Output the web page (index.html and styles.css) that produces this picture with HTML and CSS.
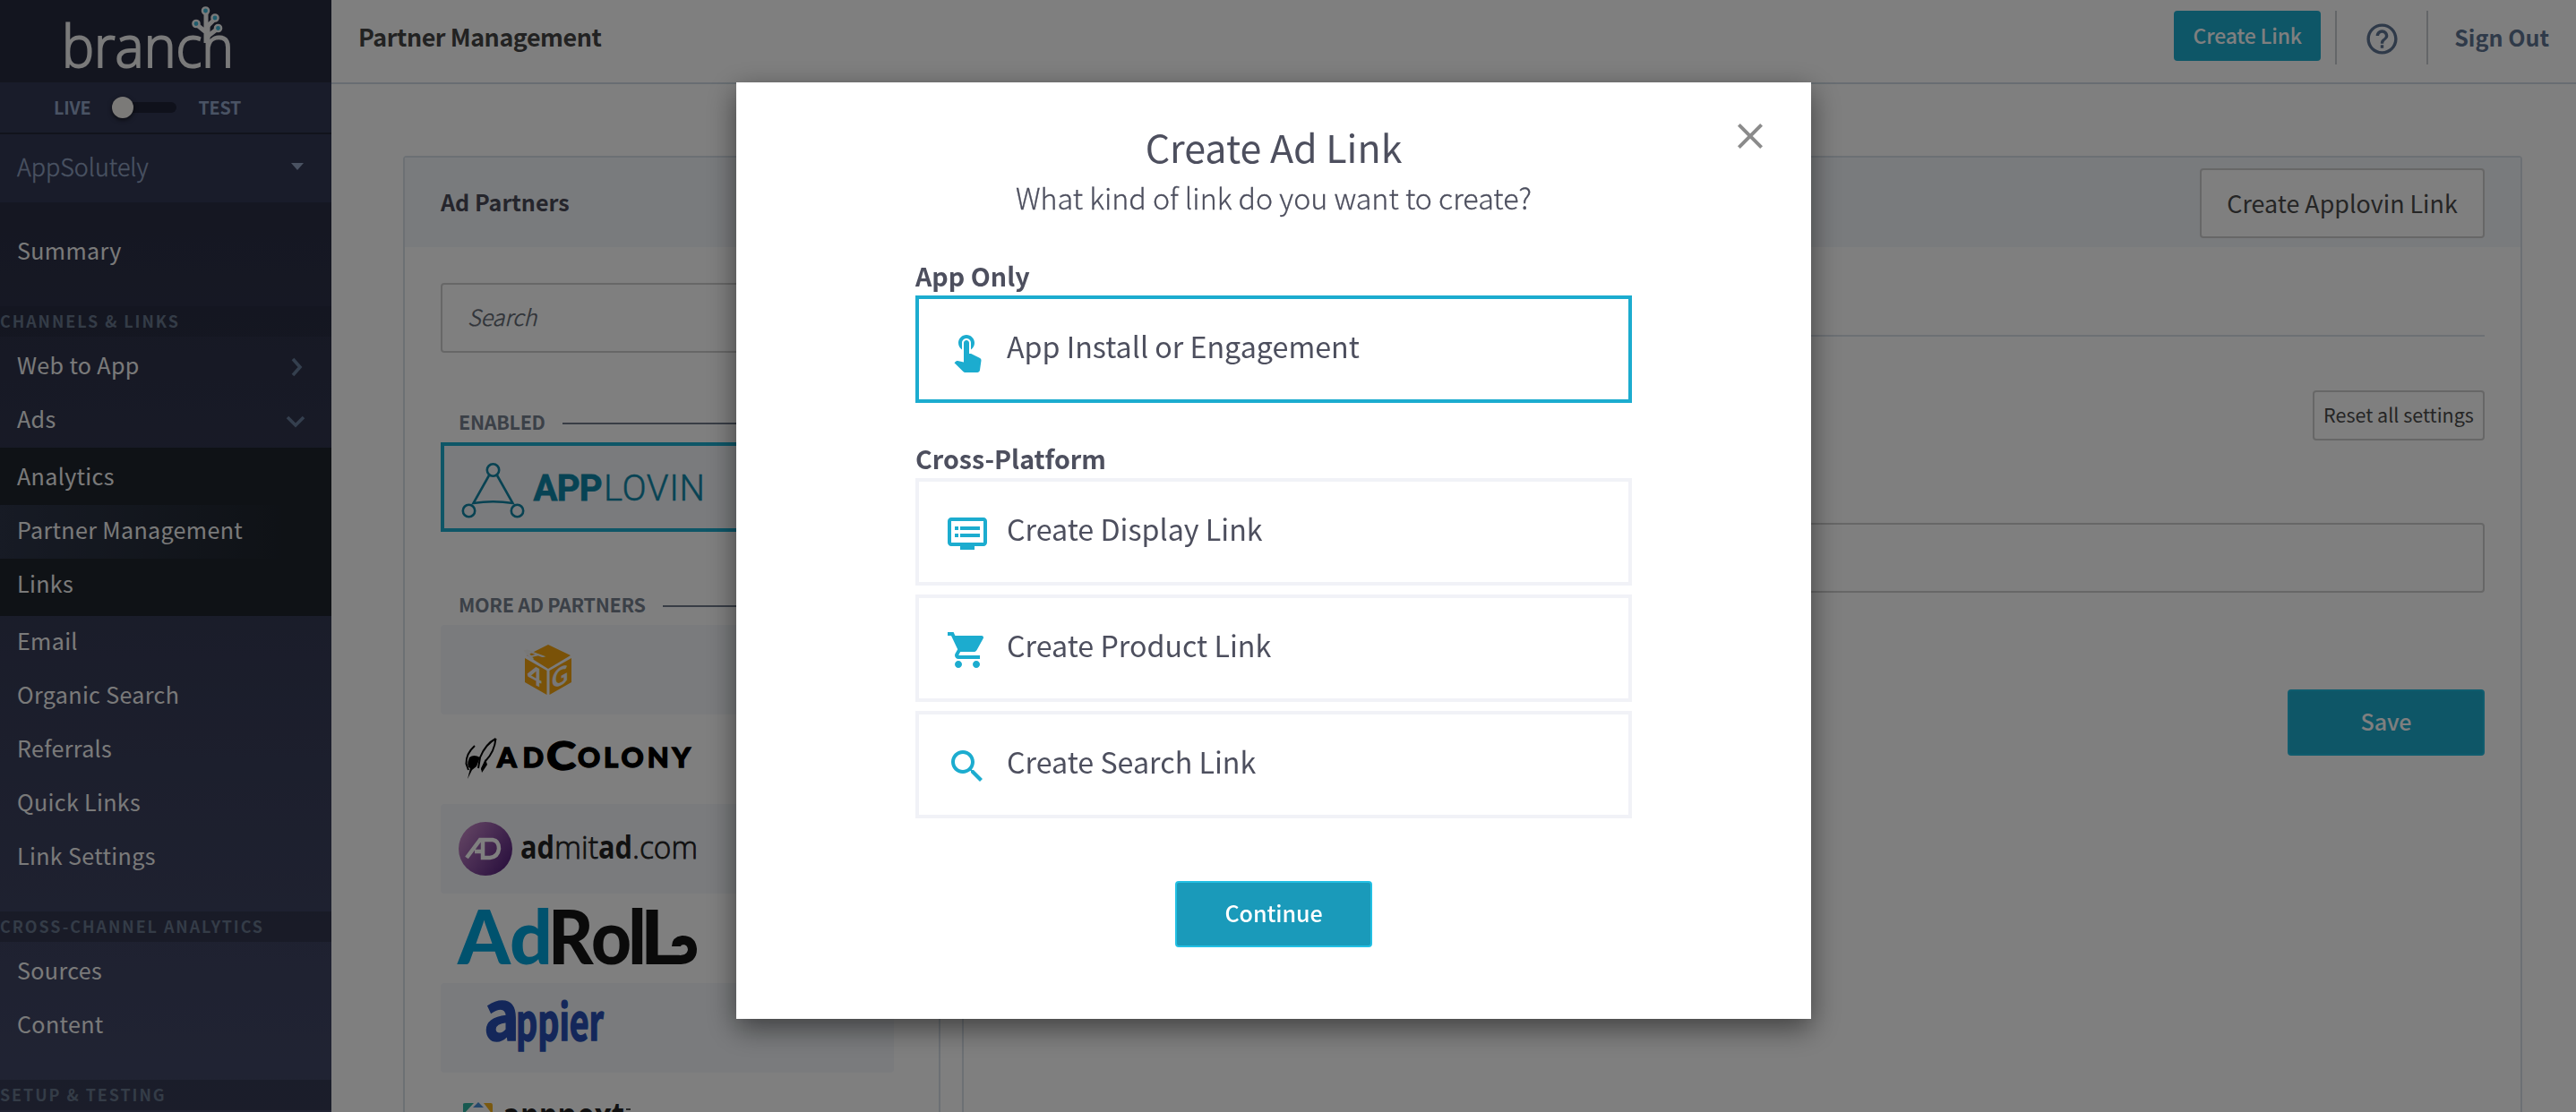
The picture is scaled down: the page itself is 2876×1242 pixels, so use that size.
FILE: index.html
```html
<!DOCTYPE html>
<html lang="en">
<head>
<meta charset="utf-8">
<title>Partner Management</title>
<link rel="stylesheet" href="styles.css">
</head>
<body>
<div class="app">
  <aside class="sidebar">
    <div class="brand">
      <svg class="brand-logo" width="370" height="92" viewBox="0 0 370 92" aria-label="branch">
        <text class="brand-word" x="69" y="75" textLength="192" lengthAdjust="spacingAndGlyphs">branch</text>
        <g class="brand-tree">
          <path d="M230 12V48M230 31L240 21M230 36L219 27M230 42L243 32"/>
          <circle cx="229.500" cy="12" r="3.600"/>
          <circle cx="240" cy="20" r="3.600"/>
          <circle cx="219" cy="26.500" r="3.600"/>
          <circle cx="243.500" cy="31.500" r="3.600"/>
        </g>
      </svg>
    </div>
    <div class="mode">
      <span>LIVE</span>
      <span class="toggle"><span class="knob"></span></span>
      <span>TEST</span>
    </div>
    <div class="app-picker"><span>AppSolutely</span><svg width="14" height="8" viewBox="0 0 14 8"><path d="M0 0H14L7 8Z"/></svg></div>
    <nav class="nav">
      <div class="group first"><a class="item">Summary</a></div>
      <div class="label soft">CHANNELS &amp; LINKS</div>
      <div class="group">
        <a class="item">Web to App<svg class="chev" width="24" height="24" viewBox="0 0 24 24"><path d="M9 3L17 12L9 21"/></svg></a>
        <a class="item">Ads<svg class="chev" width="24" height="24" viewBox="0 0 24 24"><path d="M3 8L12 17L21 8"/></svg></a>
        <div class="sub">
          <a class="item">Analytics</a>
          <a class="item current">Partner Management</a>
          <a class="item">Links</a>
        </div>
        <a class="item">Email</a>
        <a class="item">Organic Search</a>
        <a class="item">Referrals</a>
        <a class="item">Quick Links</a>
        <a class="item">Link Settings</a>
      </div>
      <div class="label">CROSS-CHANNEL ANALYTICS</div>
      <div class="group">
        <a class="item">Sources</a>
        <a class="item">Content</a>
      </div>
      <div class="label">SETUP &amp; TESTING</div>
    </nav>
  </aside>

  <div class="page">
    <header class="topbar">
      <h1>Partner Management</h1>
      <div class="actions">
        <button class="btn-top">Create Link</button>
        <span class="help"><svg width="41" height="41" viewBox="0 0 24 24"><path d="M11 18h2v-2h-2v2zm1-16C6.480 2 2 6.480 2 12s4.480 10 10 10 10-4.480 10-10S17.520 2 12 2zm0 18c-4.410 0-8-3.590-8-8s3.590-8 8-8 8 3.590 8 8-3.590 8-8 8zm0-14c-2.210 0-4 1.790-4 4h2c0-1.100.9-2 2-2s2 .9 2 2c0 2-3 1.750-3 5h2c0-2.250 3-2.500 3-5 0-2.210-1.790-4-4-4z"/></svg></span>
        <a class="signout">Sign Out</a>
      </div>
    </header>
    <main class="content">
      <section class="panel partners">
        <div class="panel-head"><h2>Ad Partners</h2></div>
        <div class="search">Search</div>
        <div class="divider"><span>ENABLED</span></div>
        <div class="partner selected">
          <svg width="498" height="92" viewBox="4 4 498 92" aria-label="AppLovin">
            <g class="lovin-mark">
              <circle cx="58.500" cy="31" r="6.700"/><circle cx="31.500" cy="76.500" r="6.700"/><circle cx="85.500" cy="76.500" r="6.700"/>
              <path d="M54 37L36.500 68Q58.500 64.500 80.500 68L63 37"/>
            </g>
            <text class="lovin-bold" x="103.500" y="65" textLength="77" lengthAdjust="spacing">APP</text>
            <text class="lovin-light" x="182" y="65" textLength="113" lengthAdjust="spacing">LOVIN</text>
          </svg>
        </div>
        <div class="divider more"><span>MORE AD PARTNERS</span></div>
        <div class="partner tint">
          <svg width="506" height="100" viewBox="0 0 506 100" aria-label="A4G">
            <path class="cube" d="M120 22L145 34L120 49L96 34ZM94 37L118.500 51V78L94 64ZM146 37L121.500 51V78L146 64Z"/>
            <text class="cube-text" transform="matrix(1.1 -.25 .95 .6 101 39)" font-size="21">A</text>
            <text class="cube-text" transform="matrix(1 .55 0 1 97 62)" font-size="28">4</text>
            <text class="cube-text" transform="matrix(.9 -.5 0 1 124 73)" font-size="28">G</text>
          </svg>
        </div>
        <div class="partner">
          <svg width="506" height="100" viewBox="0 0 506 100" aria-label="AdColony">
            <path class="rocket" d="M61.500 27Q50 33 44 48L42 60M61.500 27Q60 42 50 52L46 62M38 35Q28 44 28.500 55L31 62"/>
            <path class="rocket-fill" d="M32 48Q37 44 44 48L40 58L35 62L30 72L33 60Q28 58 32 48ZM50 50L52 56L46 65L45 60Z"/>
            <text class="colony" x="63" y="58.500" font-size="31" textLength="52" lengthAdjust="spacing">AD</text>
            <text class="colony" x="118" y="62" font-size="44" textLength="33" lengthAdjust="spacingAndGlyphs">C</text>
            <text class="colony" x="153" y="58.500" font-size="31" textLength="126" lengthAdjust="spacing">OLONY</text>
          </svg>
        </div>
        <div class="partner tint">
          <svg width="506" height="100" viewBox="0 0 506 100" aria-label="admitad">
            <defs><linearGradient id="adm" x1="0" y1=".1" x2="1" y2=".8"><stop offset="0" stop-color="#c98cc8"/><stop offset=".5" stop-color="#8f56a4"/><stop offset="1" stop-color="#54207c"/></linearGradient></defs>
            <circle cx="50" cy="50" r="30" fill="url(#adm)"/>
            <path class="adm-mark" d="M29 60L44 40H58Q65 41 65 50Q64 59 55 60H47V41M38 53H47"/>
            <text class="adm-bold" x="89" y="61" textLength="38" lengthAdjust="spacingAndGlyphs">ad</text>
            <text class="adm-thin" x="127" y="61" textLength="49" lengthAdjust="spacingAndGlyphs">mit</text>
            <text class="adm-bold" x="176" y="61" textLength="38" lengthAdjust="spacingAndGlyphs">ad</text>
            <text class="adm-thin" x="214" y="61" textLength="73" lengthAdjust="spacingAndGlyphs">.com</text>
          </svg>
        </div>
        <div class="partner">
          <svg width="506" height="100" viewBox="0 0 506 100" aria-label="AdRoll">
            <text class="roll blue" x="19" y="79" textLength="106" lengthAdjust="spacingAndGlyphs">Ad</text>
            <text class="roll" x="120" y="79" textLength="93" lengthAdjust="spacingAndGlyphs">Ro</text>
            <text class="roll" x="209" y="79" textLength="21" lengthAdjust="spacingAndGlyphs">l</text>
            <text class="roll" x="223" y="79" textLength="45" lengthAdjust="spacingAndGlyphs">L</text>
            <path class="curl" d="M250 74H268Q281 73 281 62Q280 52 270 52Q263 53 263 59"/>
          </svg>
        </div>
        <div class="partner tint">
          <svg width="506" height="100" viewBox="0 0 506 100" aria-label="Appier">
            <text class="appier" x="48" y="64" font-size="76" textLength="40" lengthAdjust="spacingAndGlyphs">a</text>
            <text class="appier" x="84" y="64" font-size="55" textLength="98" lengthAdjust="spacingAndGlyphs">ppier</text>
          </svg>
        </div>
        <div class="partner">
          <svg width="506" height="100" viewBox="0 0 506 100" aria-label="Appnext">
            <path fill="#2fb3a0" d="M25 35Q25 34 28 34H37L25 47Z"/>
            <path fill="#4a90d9" d="M36 39L42 33L48 39Z"/>
            <path fill="#f5b21e" d="M48 34H56Q58 34 58 37V47Z"/>
            <text class="appnext" x="69" y="65" textLength="136" lengthAdjust="spacingAndGlyphs">appnext</text>
            <path d="M207 41H212" stroke="#555" stroke-width="2"/>
          </svg>
        </div>
      </section>

      <section class="panel settings">
        <div class="panel-head"><button class="btn-outline">Create Applovin Link</button></div>
        <div class="settings-body">
          <div class="rule"></div>
          <button class="btn-outline small">Reset all settings</button>
          <div class="field"></div>
          <button class="btn-primary save">Save</button>
        </div>
      </section>
    </main>
  </div>
</div>

<div class="overlay">
  <div class="modal">
    <svg class="close" width="48" height="48" viewBox="0 0 24 24"><path d="M19 6.410L17.590 5 12 10.590 6.410 5 5 6.410 10.590 12 5 17.590 6.410 19 12 13.410 17.590 19 19 17.590 13.410 12z"/></svg>
    <h3>Create Ad Link</h3>
    <p class="lead">What kind of link do you want to create?</p>
    <h4>App Only</h4>
    <div class="option active">
      <svg width="48" height="48" viewBox="0 0 24 24"><path d="M9 11.240V7.500C9 6.120 10.120 5 11.500 5S14 6.120 14 7.500v3.740c1.210-.81 2-2.180 2-3.740C16 5.010 13.990 3 11.500 3S7 5.010 7 7.500c0 1.560.79 2.930 2 3.740zm9.840 4.630l-4.540-2.260c-.17-.07-.35-.11-.54-.11H13v-6c0-.83-.67-1.500-1.500-1.500S10 6.670 10 7.500v10.740l-3.430-.72c-.08-.01-.15-.03-.24-.03-.31 0-.59.13-.79.33l-.79.8 4.940 4.940c.27.27.65.44 1.060.44h6.790c.75 0 1.330-.55 1.440-1.280l.75-5.270c.01-.07.02-.14.02-.2 0-.62-.38-1.160-.91-1.380z"/></svg>
      <span>App Install or Engagement</span>
    </div>
    <h4>Cross-Platform</h4>
    <div class="option">
      <svg width="48" height="48" viewBox="0 0 24 24"><path d="M21 3H3c-1.100 0-2 .9-2 2v12c0 1.100.9 2 2 2h5v2h8v-2h5c1.100 0 2-.9 2-2V5c0-1.100-.9-2-2-2zm0 14H3V5h18v12zm-2-9H8v2h11V8zm0 4H8v2h11v-2zM7 8H5v2h2V8zm0 4H5v2h2v-2z"/></svg>
      <span>Create Display Link</span>
    </div>
    <div class="option">
      <svg width="48" height="48" viewBox="0 0 24 24"><path d="M7 18c-1.100 0-1.990.9-1.990 2S5.900 22 7 22s2-.9 2-2-.9-2-2-2zM1 2v2h2l3.600 7.590-1.350 2.450c-.16.28-.25.61-.25.960 0 1.100.9 2 2 2h12v-2H7.420c-.14 0-.25-.11-.25-.25l.03-.12.9-1.630h7.450c.75 0 1.410-.41 1.750-1.030l3.580-6.490c.08-.14.12-.31.12-.48 0-.55-.45-1-1-1H5.210l-.94-2H1zm16 16c-1.100 0-1.990.9-1.990 2s.89 2 1.990 2 2-.9 2-2-.9-2-2-2z"/></svg>
      <span>Create Product Link</span>
    </div>
    <div class="option">
      <svg width="48" height="48" viewBox="0 0 24 24"><path d="M15.500 14h-.79l-.28-.27C15.410 12.590 16 11.110 16 9.500 16 5.910 13.090 3 9.500 3S3 5.910 3 9.500 5.910 16 9.500 16c1.610 0 3.090-.59 4.230-1.570l.27.28v.79l5 4.990L20.490 19l-4.990-5zm-6 0C7.010 14 5 11.990 5 9.500S7.010 5 9.500 5 14 7.010 14 9.500 11.990 14 9.500 14z"/></svg>
      <span>Create Search Link</span>
    </div>
    <button class="btn-primary continue">Continue</button>
  </div>
</div>
</body>
</html>
```
FILE: styles.css
```css
* { box-sizing: border-box; }
body {
  margin: 0;
  height: 1242px;
  overflow: hidden;
  background: #fff;
  color: #4d4f5e;
  font-family: "Noto Sans CJK SC", "Source Sans Pro", sans-serif;
}
h1, h2, h3, h4, p { margin: 0; }
button { font-family: inherit; padding: 0; display: block; text-align: center; }
svg { display: block; flex: none; }
.app { display: flex; height: 1242px; overflow: hidden; }

/* Sidebar */
.sidebar { width: 370px; flex: none; background: #2a2e44; display: flex; flex-direction: column; }
.brand { height: 92px; background: #262a3e; }
.brand-word { font: 300 64px "Open Sans", sans-serif; fill: #f4f4f4; stroke: #f4f4f4; stroke-width: 2px; }
.brand-tree { stroke: #f4f4f4; stroke-width: 5px; fill: none; }
.brand-tree circle { fill: #3cb6d8; stroke-width: 2.4px; }
.mode {
  height: 58px; border-bottom: 2px solid #232739; background: #323854;
  display: flex; align-items: center; gap: 24px; padding-left: 60px;
  font-size: 19.7px; line-height: 20px; font-weight: 700; color: #94a7c8; letter-spacing: -.2px;
}
.toggle { width: 72px; height: 12px; border-radius: 6px; background: #1e2236; display: flex; align-items: center; }
.knob { width: 24px; height: 24px; border-radius: 50%; background: #f6f4f0; box-shadow: 0 2px 5px rgba(0, 0, 0, .6); flex: none; }
.app-picker {
  height: 76px; background: #323854; display: flex; justify-content: space-between; align-items: center;
  padding: 0 31px 4px 19px; font-size: 26.86px; line-height: 40px; font-weight: 300; color: #94a5c4;
  -webkit-text-stroke: .4px #94a5c4;
}
.app-picker svg { fill: #94a5c4; }
.nav { flex: 1; background: linear-gradient(#2a2e44, #424868); overflow: hidden; }
.group { padding: 4px 0 30px; }
.group.first { padding-top: 26px; }
.item {
  display: flex; justify-content: space-between; height: 60px; padding: 0 28px 6px 19px;
  font-size: 25.07px; line-height: 54px; letter-spacing: .35px; color: #f4f4f4;
}
.chev { fill: none; stroke: #687e9c; stroke-width: 3.6px; margin-top: 18px; }
.sub { background: #1e242c; padding: 4px 0; }
.current { background: linear-gradient(90deg, #2e364a, #1e242c 327px); }
.label {
  height: 34px; background: rgba(0, 0, 0, .18); color: #68788f; white-space: nowrap;
  font-size: 17.9px; line-height: 32px; font-weight: 700; letter-spacing: 1.95px;
}
.label.soft { background: rgba(0, 0, 0, .08); }

/* Top bar */
.page { flex: 1; min-width: 0; }
.topbar { height: 94px; border-bottom: 2px solid #d0dbe4; display: flex; justify-content: space-between; padding: 12px 30px 0 30px; }
.topbar h1 { font-size: 26.86px; line-height: 58px; font-weight: 700; letter-spacing: -.45px; color: #444; }
.actions { display: flex; }
.btn-top { width: 164px; height: 56px; margin-right: 16px; border: 0; border-radius: 4px; background: #1caccf; color: #fff; font-size: 23px; line-height: 54px; font-weight: 500; letter-spacing: -.2px; padding-bottom: 2px; }
.help { width: 104px; height: 60px; border: solid #c8ccd0; border-width: 0 2px; display: flex; justify-content: center; padding-top: 11px; }
.help svg { fill: #5e7493; }
.signout { padding-left: 29px; font-size: 25.07px; line-height: 59px; font-weight: 700; color: #5e7493; }

/* Panels */
.content { display: flex; gap: 24px; padding: 80px 60px 0 80px; }
.panel { border: 2px solid #d8e0e9; border-radius: 4px; height: 1200px; flex: none; }
.panel-head { height: 100px; background: #f3f6fa; }
.partners { width: 600px; }
.partners .panel-head { padding-left: 40px; }
.panel-head h2 { font-size: 25.07px; line-height: 98px; font-weight: 700; color: #4a4b58; }
.search {
  margin: 40px 50px 0 40px; height: 78px; border: 2px solid #cecece; border-radius: 4px; padding-left: 28px;
  font-size: 25.07px; line-height: 71px; font-weight: 300; font-style: italic; color: #5e6670;
  -webkit-text-stroke: .4px #5e6670;
}
.divider { height: 100px; margin: 0 50px 0 40px; padding-left: 20px; display: flex; align-items: flex-end; gap: 19px; }
.divider.more { height: 104px; }
.divider span { font-size: 21.5px; line-height: 20px; font-weight: 700; letter-spacing: -.3px; color: #76818f; margin-bottom: 13px; }
.divider::after { content: ""; flex: 1; height: 2px; background: #707a8b; margin-bottom: 20px; }
.partner { margin: 0 50px 0 40px; height: 100px; overflow: hidden; }
.tint { background: #f4f7fb; border-radius: 4px; }
.selected { border: 4px solid #1caccf; background: #f4f7fb; }

/* Partner logos */
.lovin-mark { fill: none; stroke: #1085a5; stroke-width: 2.6px; }
.lovin-bold { font: 700 40px "Roboto", sans-serif; fill: #0f87a8; stroke: #0f87a8; stroke-width: .8px; }
.lovin-light { font: 300 40px "Roboto", sans-serif; fill: #0f87a8; stroke: #0f87a8; stroke-width: .5px; }
.cube { fill: #f5a510; }
.cube-text { font-family: "Lato", sans-serif; font-weight: 900; fill: #f0f0f0; }
.rocket { fill: none; stroke: #000; stroke-width: 2px; }
.rocket-fill { fill: #000; }
.colony { font-family: "Lato", sans-serif; font-weight: 900; fill: #000; stroke: #000; stroke-width: 1.4px; }
.adm-mark { fill: none; stroke: #fff; stroke-width: 4.5px; }
.adm-bold { font: 700 35px "Open Sans", sans-serif; fill: #222; }
.adm-thin { font: 300 35px "Open Sans", sans-serif; fill: #222; stroke: #222; stroke-width: .8px; }
.roll { font: 900 83px "Lato", sans-serif; fill: #151515; }
.roll.blue { fill: #00a5dc; }
.curl { fill: none; stroke: #151515; stroke-width: 10px; }
.appier { font-family: "Noto Sans CJK SC", sans-serif; font-weight: 700; fill: #284fb4; stroke: #284fb4; stroke-width: 1.6px; }
.appnext { font: 700 44px "Open Sans", sans-serif; fill: #222; }

/* Settings panel */
.settings { flex: 1; }
.settings .panel-head { display: flex; justify-content: flex-end; padding: 12px 40px 0 0; }
.btn-outline { width: 318px; height: 78px; border: 2px solid #cecece; border-radius: 4px; background: #fff; color: #4a4a4a; font-size: 26.86px; line-height: 74px; }
.settings-body { padding: 98px 40px 0; display: flex; flex-direction: column; align-items: flex-end; }
.rule { align-self: stretch; height: 2px; background: #d8e0e9; }
.btn-outline.small { width: 192px; height: 56px; margin-top: 60px; font-size: 21.5px; line-height: 50px; padding-bottom: 2px; }
.field { align-self: stretch; height: 78px; border: 2px solid #cecece; border-radius: 4px; margin-top: 92px; }
.btn-primary { border: 2px solid #22bfe3; border-radius: 4px; background: #1a9aba; color: #fff; font-size: 25.07px; font-weight: 500; letter-spacing: -.1px; line-height: 66px; padding-bottom: 4px; height: 74px; }
.save { width: 220px; margin-top: 108px; background: #1caccf; border-color: #20b8dd; }

/* Dialog */
.overlay { position: fixed; inset: 0; background: rgba(0, 0, 0, .5); display: flex; justify-content: center; align-items: flex-start; padding: 92px 32px 0 0; }
.modal {
  position: relative; width: 1200px; height: 1046px; background: #fff; box-shadow: 0 10px 30px rgba(0, 0, 0, .5);
  display: flex; flex-direction: column; align-items: stretch; padding: 42px 200px 0;
}
.close { position: absolute; top: 36px; right: 44px; fill: #8b8b8b; }
.modal h3 { font-size: 42.97px; line-height: 58px; font-weight: 400; text-align: center; }
.lead { font-size: 32.23px; line-height: 56px; font-weight: 300; text-align: center; -webkit-text-stroke: .3px #4d4f5e; }
.modal h4 { font-size: 28.65px; line-height: 38px; font-weight: 700; margin-top: 41px; height: 41px; }
.option { height: 120px; flex: none; border: 4px solid #f1f2f7; display: flex; padding: 0 30px; }
.option + .option { margin-top: 10px; }
.option svg { margin-top: 34px; fill: #1caccf; }
.option span { margin-left: 20px; font-size: 32.23px; line-height: 104px; }
.option.active { border-color: #1caccf; }
.option.active + h4 { margin-top: 43px; }
.continue { width: 220px; margin: 70px auto 0; }
```
